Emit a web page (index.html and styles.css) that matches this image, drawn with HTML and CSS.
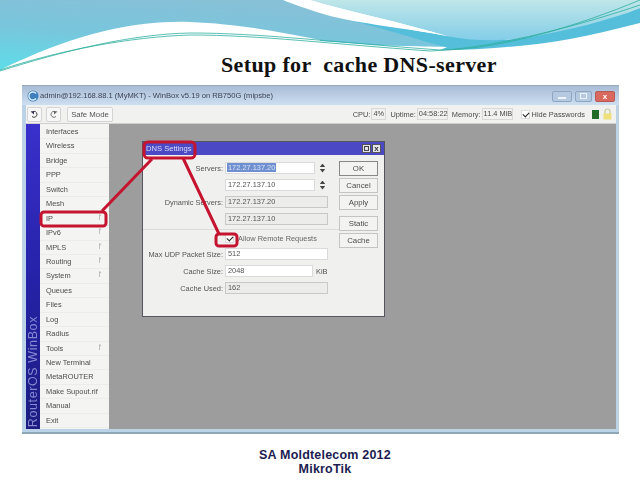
FILE: index.html
```html
<!DOCTYPE html>
<html lang="en">
<head>
    <meta charset="UTF-8">
    <title>Setup for cache DNS-server</title>
    <link rel="stylesheet" href="styles.css">
</head>
<body>
    <div class="slide">
        <svg class="swoosh" width="640" height="80" viewBox="0 0 640 80">
            <defs>
                <linearGradient id="leftTeal" x1="0" y1="1" x2="0.35" y2="0">
                    <stop offset="0" stop-color="#5edde9"/>
                    <stop offset="0.55" stop-color="#78c6dc"/>
                    <stop offset="1" stop-color="#86c1d8"/>
                </linearGradient>
                <linearGradient id="rightSky" x1="0" y1="0" x2="0" y2="1">
                    <stop offset="0" stop-color="#bfe6e8"/>
                    <stop offset="1" stop-color="#82cde8"/>
                </linearGradient>
            </defs>
            <path fill="url(#leftTeal)" d="M0 0H300L447 48C390 46 350 43 320 40C280 32 240 24 190 22C130 20 70 36 0 70Z"/>
            <path fill="url(#rightSky)" d="M310 0H640V8C600 24 550 38 490 41C470 41 455 39 447 36C400 22 350 12 310 0Z"/>
            <path fill="#55bedb" d="M640 8V23C590 36 550 44 507 47C485 49 465 50 447 50L320 41V40C380 44 420 48 447 48C420 40 380 27 320 13L447 36C470 41 500 42 530 37C570 30 610 20 640 8Z"/>
            <path fill="#fff" d="M283 0H310C350 12 400 22 447 36C400 27 350 23 320 13C305 8 292 4 283 0Z"/>
            <path fill="#fff" d="M320 43C370 46 420 46 447 47L440 50C400 50 360 46 320 43Z"/>
            <path class="line" d="M0 71C60 52 130 34 190 33C260 33 330 42 440 50C500 50 580 25 640 0"/>
            <path class="line" d="M0 70C60 50 130 37 190 35C260 35 330 44 430 51C500 48 590 22 640 5"/>
        </svg>

        <h1 class="title">Setup for&nbsp; cache DNS-server</h1>

        <div class="winbox">
            <div class="titlebar">
                <svg class="app-icon" width="12" height="12" viewBox="0 0 12 12">
                    <circle cx="6" cy="6" r="5.5" fill="#3f7fc0"/>
                    <path d="M9 3.5A4 4 0 1 0 9 8.5" fill="none" stroke="#d8ecf6" stroke-width="1.4"/>
                </svg>
                <span class="titlebar-text">admin@192.168.88.1 (MyMKT) - WinBox v5.19 on RB750G (mipsbe)</span>
                <div class="win-buttons">
                    <span class="win-btn"><i class="min-mark"></i></span>
                    <span class="win-btn max"><i class="max-mark"></i></span>
                    <span class="win-btn close">x</span>
                </div>
            </div>

            <div class="toolbar">
                <button class="tool-btn icon">
                    <svg width="9" height="9" viewBox="0 0 9 9"><path d="M3 1.5A3 3 0 1 1 2 6.5" fill="none" stroke="#444" stroke-width="1"/><path d="M0.5 1.5L4 1V4.5Z" fill="#335"/></svg>
                </button>
                <button class="tool-btn icon">
                    <svg width="9" height="9" viewBox="0 0 9 9"><path d="M6 1.5A3 3 0 1 0 7 6.5" fill="none" stroke="#777" stroke-width="1"/><path d="M8.5 1.5L5 1V4.5Z" fill="#666"/></svg>
                </button>
                <button class="tool-btn safe">Safe Mode</button>
                <div class="status">
                    <span>CPU:</span><span class="stat-box cpu">4%</span>
                    <span class="stat-label">Uptime:</span><span class="stat-box uptime">04:58:22</span>
                    <span class="stat-label">Memory:</span><span class="stat-box memory">11.4 MiB</span>
                    <span class="check small"></span>
                    <span>Hide Passwords</span>
                    <span class="led"></span>
                    <svg class="lock" width="9" height="12" viewBox="0 0 9 12"><path d="M2 6V3.5a2.5 2.5 0 0 1 5 0V6" fill="none" stroke="#c9c9a0" stroke-width="1.2"/><rect x="0.5" y="5.5" width="8" height="6" fill="#eee07a"/></svg>
                </div>
            </div>

            <div class="workspace">
                <div class="brand"><span>RouterOS WinBox</span></div>
                <ul class="menu">
                    <li>Interfaces</li>
                    <li>Wireless</li>
                    <li>Bridge</li>
                    <li>PPP</li>
                    <li>Switch</li>
                    <li>Mesh</li>
                    <li class="sub">IP</li>
                    <li class="sub">IPv6</li>
                    <li class="sub">MPLS</li>
                    <li class="sub">Routing</li>
                    <li class="sub">System</li>
                    <li>Queues</li>
                    <li>Files</li>
                    <li>Log</li>
                    <li>Radius</li>
                    <li class="sub">Tools</li>
                    <li>New Terminal</li>
                    <li>MetaROUTER</li>
                    <li>Make Supout.rif</li>
                    <li>Manual</li>
                    <li>Exit</li>
                </ul>
                <div class="desktop">
                    <div class="dialog">
                        <div class="dialog-title">
                            <span>DNS Settings</span>
                            <span class="dlg-btn"><i></i></span>
                            <span class="dlg-btn">x</span>
                        </div>
                        <div class="dialog-body">
                            <div class="fields">
                                <div class="row"><label>Servers:</label><span class="input short"><b class="selected">172.27.137.20</b></span><span class="spin"></span></div>
                                <div class="row"><label></label><span class="input short">172.27.137.10</span><span class="spin"></span></div>
                                <div class="row"><label>Dynamic Servers:</label><span class="input readonly">172.27.137.20</span></div>
                                <div class="row"><label></label><span class="input readonly">172.27.137.10</span></div>
                                <div class="sep"></div>
                                <div class="row check-row"><label></label><span class="check"></span><span class="check-label">Allow Remote Requests</span></div>
                                <div class="row"><label>Max UDP Packet Size:</label><span class="input">512</span></div>
                                <div class="row"><label>Cache Size:</label><span class="input cache">2048</span><span class="unit">KiB</span></div>
                                <div class="row"><label>Cache Used:</label><span class="input readonly">162</span></div>
                            </div>
                            <div class="buttons">
                                <button class="dlg-action default">OK</button>
                                <button class="dlg-action">Cancel</button>
                                <button class="dlg-action">Apply</button>
                                <button class="dlg-action gap">Static</button>
                                <button class="dlg-action">Cache</button>
                            </div>
                        </div>
                    </div>
                </div>
            </div>
        </div>

        <svg class="callouts" width="640" height="480" viewBox="0 0 640 480">
            <rect x="41" y="212" width="65" height="14" rx="3"/>
            <rect x="144" y="142" width="51" height="16" rx="4"/>
            <rect x="216" y="234" width="21" height="12" rx="3"/>
            <path d="M102 211L152 159M183 158L219 234"/>
        </svg>

        <div class="footer">SA Moldtelecom 2012<br>MikroTik</div>
    </div>
</body>
</html>
```

FILE: styles.css
```css
* {
    box-sizing: border-box;
}

body {
    margin: 0;
    background: #fff;
    font-family: "Liberation Sans", Arial, sans-serif;
}

.slide {
    position: relative;
    width: 640px;
    height: 480px;
    overflow: hidden;
    padding-top: 52px;
}

.swoosh {
    position: absolute;
    top: 0;
    left: 0;
}

.swoosh .line {
    fill: none;
    stroke: #2fae9e;
    stroke-width: 0.8;
}

.title {
    position: relative;
    margin: 0 0 7px 221px;
    height: 26px;
    font-family: "Liberation Serif", serif;
    font-size: 22px;
    line-height: 26px;
    font-weight: bold;
    letter-spacing: 0.35px;
    color: #111;
    white-space: nowrap;
}

/* winbox window */
.winbox {
    position: relative;
    width: 597px;
    height: 349px;
    margin-left: 22px;
    padding: 0 3px 5px 4px;
    background: #bcd2e6;
    border-top: 1px solid #9aa8c0;
    border-bottom: 2px solid #8fa8b8;
    font-size: 7.4px;
    color: #4a4a4a;
    filter: blur(0.45px);
}

.titlebar {
    display: flex;
    align-items: center;
    height: 19px;
    margin: 0 -3px 0 -4px;
    padding: 0 4px 0 5px;
    background: linear-gradient(#a8bcd6, #cddff0);
}

.app-icon {
    margin-right: 1px;
}

.titlebar-text {
    font-size: 7.6px;
    color: #3c4454;
    white-space: nowrap;
}

.win-buttons {
    display: flex;
    gap: 3px;
    margin-top: 1px;
    margin-left: auto;
}

.win-btn {
    display: flex;
    align-items: center;
    justify-content: center;
    width: 20px;
    height: 11px;
    border: 1px solid #8fa6c2;
    border-radius: 2px;
    background: #b5c9e0;
}

.win-btn.max {
    width: 17px;
}

.win-btn.close {
    background: #d9695f;
    border-color: #b85a55;
    color: #fff;
    font-size: 8px;
    font-weight: bold;
}

.min-mark {
    width: 8px;
    height: 2px;
    margin-top: 3px;
    background: #eef4fa;
}

.max-mark {
    width: 7px;
    height: 6px;
    border: 1px solid #eef4fa;
}

.toolbar {
    display: flex;
    align-items: center;
    height: 19px;
    padding-left: 1px;
    background: #f1f1f0;
    border-bottom: 1px solid #d0d0d0;
}

.tool-btn {
    height: 15px;
    margin: 0 4px 0 0;
    padding: 0;
    border: 1px solid #d4d4d4;
    border-radius: 2px;
    background: #f7f7f7;
    font-family: inherit;
    font-size: 7.8px;
    color: #555;
}

.tool-btn.icon {
    display: flex;
    align-items: center;
    justify-content: center;
    width: 15px;
}

.tool-btn.safe {
    width: 46px;
    margin-left: 2px;
}

.status {
    display: flex;
    align-items: center;
    margin-left: auto;
    padding-right: 4px;
    white-space: nowrap;
}

.stat-label {
    margin-left: 4px;
}

.stat-box {
    height: 12px;
    margin-left: 1px;
    padding-left: 1px;
    border: 1px solid #d8d8d8;
    line-height: 10px;
}

.stat-box.cpu {
    width: 15px;
}

.stat-box.uptime {
    width: 31px;
}

.stat-box.memory {
    width: 31px;
}

.check {
    position: relative;
    display: block;
    width: 9px;
    height: 9px;
    background: #fff;
    border: 1px solid #ddd;
}

.check::after {
    content: "";
    position: absolute;
    left: 1px;
    top: 1px;
    width: 5px;
    height: 3px;
    border-left: 1.5px solid #222;
    border-bottom: 1.5px solid #222;
    transform: rotate(-45deg);
}

.check.small {
    margin: 0 2px 0 8px;
}

.led {
    width: 7px;
    height: 9px;
    margin: 0 4px 0 7px;
    background: #1f6b2a;
}

.workspace {
    display: flex;
    height: 305px;
}

.brand {
    display: flex;
    align-items: flex-start;
    justify-content: center;
    width: 14px;
    padding: 0;
    background: linear-gradient(#3a30cc, #2622a8 50%, #1c1c80);
}

.brand span {
    writing-mode: vertical-rl;
    transform: rotate(180deg);
    margin-top: auto;
    padding-top: 2px;
    font-size: 12.5px;
    letter-spacing: 0.6px;
    line-height: 14px;
    color: #8588d2;
    white-space: nowrap;
}

.menu {
    width: 69px;
    margin: 0;
    padding: 1px 0 0;
    list-style: none;
    background: #f4f4f2;
}

.menu li {
    position: relative;
    height: 14.45px;
    padding-left: 6px;
    border-bottom: 1px solid #ececea;
    line-height: 14px;
    color: #4c4c4c;
}

.menu li.sub::after {
    content: "\21BE";
    position: absolute;
    right: 6px;
    top: -1px;
    color: #aaa;
    font-family: "DejaVu Sans", sans-serif;
    font-size: 8px;
}

.desktop {
    position: relative;
    flex: 1;
    background: #9d9d9d;
}

/* the dns settings window floats on the winbox desktop */
.dialog {
    position: absolute;
    left: 33px;
    top: 17px;
    width: 243px;
    height: 176px;
    background: #f0f0ef;
    border: 1px solid #55555d;
}

.dialog-title {
    display: flex;
    align-items: center;
    gap: 1px;
    height: 13px;
    padding: 0 3px 0 3px;
    background: #4b49c4;
    color: #dcdcf8;
    font-size: 7.6px;
}

.dialog-title span:first-child {
    margin-right: auto;
}

.dlg-btn {
    display: flex;
    align-items: center;
    justify-content: center;
    width: 9px;
    height: 9px;
    background: #e4e4ee;
    border: 1px solid #555;
    color: #333;
    font-size: 8px;
    line-height: 7px;
    font-weight: bold;
}

.dlg-btn i {
    width: 5px;
    height: 5px;
    border: 1px solid #444;
}

.dialog-body {
    display: flex;
    padding-top: 6px;
}

.fields {
    display: flex;
    flex-direction: column;
    gap: 5px;
    width: 196px;
    padding-top: 1px;
}

.row {
    display: flex;
    align-items: center;
    height: 12px;
}

.row label {
    flex: none;
    width: 80px;
    margin-right: 2px;
    text-align: right;
    white-space: nowrap;
    color: #555;
}

.input {
    width: 103px;
    height: 12px;
    padding-left: 2px;
    background: #fff;
    border: 1px solid #dadada;
    line-height: 10px;
    color: #555;
    white-space: nowrap;
}

.input.short {
    width: 90px;
}

.input.cache {
    width: 88px;
}

.input.readonly {
    background: #ececeb;
    border-color: #c8c8c8;
}

.selected {
    margin-left: -1px;
    padding: 0 1px;
    background: #6f8fd0;
    color: #d8e4f8;
    font-weight: normal;
}

.spin {
    position: relative;
    width: 5px;
    height: 9px;
    margin-left: 5px;
    background: linear-gradient(#444 0 40%, transparent 40% 60%, #444 60%);
    clip-path: polygon(50% 0, 100% 35%, 100% 40%, 0 40%, 0 35%, 50% 0, 50% 0, 0 60%, 100% 60%, 100% 65%, 50% 100%, 0 65%, 0 60%);
}

.unit {
    margin-left: 3px;
    color: #555;
}

.sep {
    height: 1px;
    margin: -1px 0 -3px;
    background: #dcdcdc;
}

.row.check-row {
    height: 11px;
    padding-top: 1px;
}

.check-label {
    margin-left: 4px;
    color: #666;
}

.buttons {
    display: flex;
    flex-direction: column;
    gap: 2px;
}

.dlg-action {
    width: 39px;
    height: 15px;
    padding: 0;
    background: #f3f3f2;
    border: 1px solid #c4c4c4;
    font-family: inherit;
    font-size: 7.8px;
    color: #4c4c4c;
}

.dlg-action.default {
    border-color: #888;
}

.dlg-action.gap {
    margin-top: 4px;
}

.callouts {
    position: absolute;
    top: 0;
    left: 0;
    fill: none;
    stroke: #c5142f;
    stroke-width: 3;
    filter: blur(0.3px);
}

.footer {
    margin-top: 15px;
    margin-left: 10px;
    text-align: center;
    font-size: 12.5px;
    line-height: 13.5px;
    font-weight: bold;
    letter-spacing: 0.2px;
    color: #1c1c50;
}
```
